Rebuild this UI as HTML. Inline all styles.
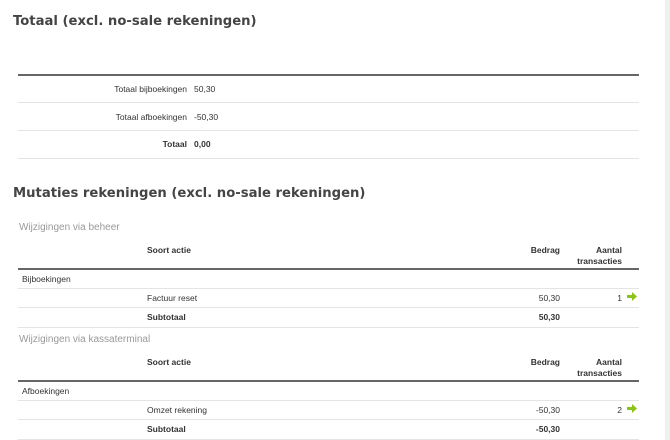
<!DOCTYPE html>
<html><head><style>
body{margin:0;width:670px;height:440px;background:#fff;position:relative;overflow:hidden;font-family:"Liberation Sans",Arial,sans-serif;color:#333}
.a{position:absolute;white-space:nowrap}
h1{position:absolute;margin:0;font-family:"DejaVu Sans",sans-serif;font-weight:bold;font-size:13.2px;color:#444;left:13px;white-space:nowrap}
.s{font-size:8.5px;color:#333}
.b{font-weight:bold}
.r{text-align:right}
.g{font-size:10px;color:#999}
.l{position:absolute;height:1px;background:#e4e4e4;left:18px;width:621px}
.t{position:absolute;height:2px;background:#666;left:18px;width:621px}
</style></head><body>
<div style="position:absolute;left:665px;top:0;width:5px;height:440px;background:#f0f0f0"></div>
<h1 style="top:14px">Totaal (excl. no-sale rekeningen)</h1>
<div class="t" style="top:74px"></div>
<div class="a s r" style="right:483px;top:84px">Totaal bijboekingen</div><div class="a s" style="left:194px;top:84px">50,30</div>
<div class="l" style="top:102px"></div>
<div class="a s r" style="right:483px;top:112px">Totaal afboekingen</div><div class="a s" style="left:194px;top:112px">-50,30</div>
<div class="l" style="top:130px"></div>
<div class="a s b r" style="right:483px;top:139px">Totaal</div><div class="a s b" style="left:194px;top:139px">0,00</div>
<div class="l" style="top:158px"></div>

<h1 style="top:186px">Mutaties rekeningen (excl. no-sale rekeningen)</h1>

<div class="a g" style="left:19px;top:222px">Wijzigingen via beheer</div>
<div class="a s b" style="left:147px;top:245px">Soort actie</div>
<div class="a s b r" style="right:110px;top:245px">Bedrag</div>
<div class="a s b r" style="right:48px;top:245px;line-height:11px">Aantal<br>transacties</div>
<div class="t" style="top:268px"></div>
<div class="a s" style="left:22px;top:274px">Bijboekingen</div>
<div class="l" style="top:288px"></div>
<div class="a s" style="left:147px;top:293px">Factuur reset</div>
<div class="a s r" style="right:110px;top:293px">50,30</div>
<div class="a s r" style="right:48px;top:293px">1</div>
<svg class="a" style="left:627px;top:292px" width="10" height="9" viewBox="0 0 10 9"><path d="M0 3h5V0l5 4.5L5 9V6H0z" fill="#8bc21c"/></svg>
<div class="l" style="top:307px"></div>
<div class="a s b" style="left:147px;top:312px">Subtotaal</div>
<div class="a s b r" style="right:110px;top:312px">50,30</div>
<div class="l" style="top:327px"></div>

<div class="a g" style="left:19px;top:334px">Wijzigingen via kassaterminal</div>
<div class="a s b" style="left:147px;top:357px">Soort actie</div>
<div class="a s b r" style="right:110px;top:357px">Bedrag</div>
<div class="a s b r" style="right:48px;top:357px;line-height:11px">Aantal<br>transacties</div>
<div class="t" style="top:380px"></div>
<div class="a s" style="left:22px;top:386px">Afboekingen</div>
<div class="l" style="top:400px"></div>
<div class="a s" style="left:147px;top:405px">Omzet rekening</div>
<div class="a s r" style="right:110px;top:405px">-50,30</div>
<div class="a s r" style="right:48px;top:405px">2</div>
<svg class="a" style="left:627px;top:404px" width="10" height="9" viewBox="0 0 10 9"><path d="M0 3h5V0l5 4.5L5 9V6H0z" fill="#8bc21c"/></svg>
<div class="l" style="top:419px"></div>
<div class="a s b" style="left:147px;top:424px">Subtotaal</div>
<div class="a s b r" style="right:110px;top:424px">-50,30</div>
<div class="l" style="top:439px"></div>
</body></html>
